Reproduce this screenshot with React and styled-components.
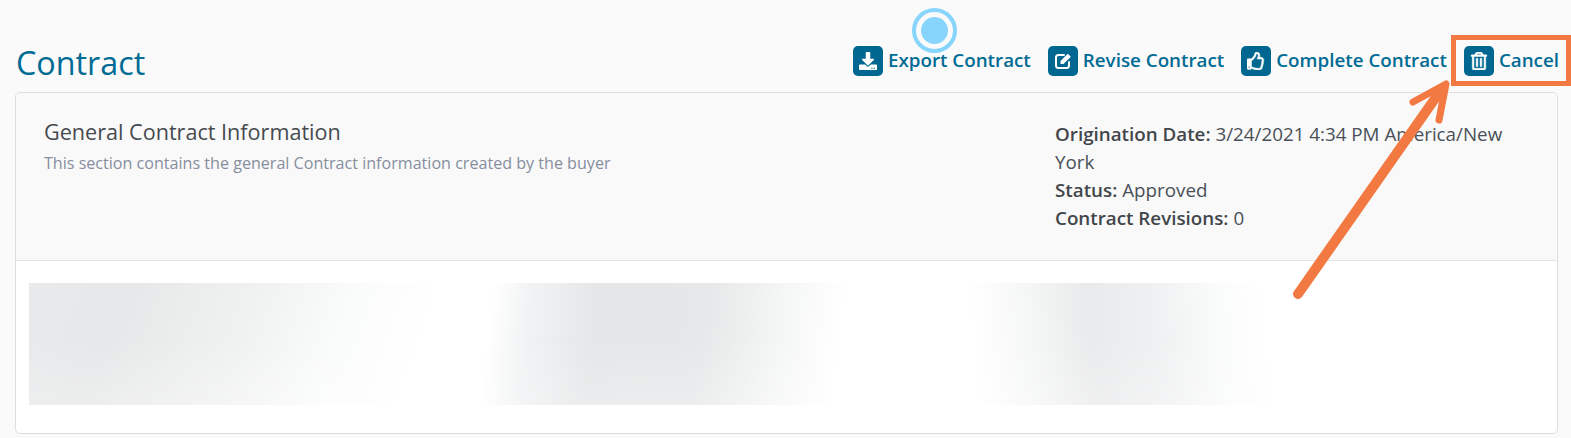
import React from "react";
import styled, { createGlobalStyle } from "styled-components";
import { FaDownload, FaRegThumbsUp, FaRegTrashAlt } from "react-icons/fa";

const GlobalStyle = createGlobalStyle`
  html, body {
    margin: 0;
    padding: 0;
    background: #fafafa;
    font-family: "Open Sans", "Liberation Sans", sans-serif;
  }
`;

// pencil in a square, the package one has a hollow pencil
const EditIcon = () => (
  <svg width="20" height="20" viewBox="0 0 20 20" aria-hidden="true">
    <path
      d="M11 4 H5.5 A2.5 2.5 0 0 0 3 6.5 V14.5 A2.5 2.5 0 0 0 5.5 17 H13.5 A2.5 2.5 0 0 0 16 14.5 V11"
      fill="none"
      stroke="currentColor"
      strokeWidth="2"
      strokeLinecap="round"
    />
    <path d="M7.5 13 V10 L14.8 2.7 L17.8 5.7 L10.5 13 Z" fill="currentColor" />
  </svg>
);

const actions = [
  { label: "Export Contract", icon: <FaDownload /> },
  { label: "Revise Contract", icon: <EditIcon /> },
  { label: "Complete Contract", icon: <FaRegThumbsUp stroke="currentColor" strokeWidth="14" /> },
  { label: "Cancel", icon: <FaRegTrashAlt stroke="currentColor" strokeWidth="14" /> },
];

const smears = [
  {
    width: 441,
    fill: "linear-gradient(110deg, #e9eaeb 0%, #e6e7e8 20%, #f0f1f1 48%, #fafbfb 68%, #fff 85%)",
  },
  {
    width: 390,
    fill: "linear-gradient(97deg, #fff 6%, #f0f2f3 16%, #e4e6e7 32%, #e5e7e8 58%, #f6f7f7 80%, #fff 93%)",
  },
  { width: 100, fill: "#fff" },
  {
    width: 315,
    fill: "linear-gradient(85deg, #fff 6%, #f6f7f7 22%, #e9eaeb 42%, #eff0f1 62%, #fafbfb 82%, #fff 96%)",
  },
];

export default function App() {
  return (
    <Page>
      <GlobalStyle />
      <Header>
        <Title>Contract</Title>
        <Actions>
          {actions.map((action) => (
            <Action key={action.label}>
              <IconBox>{action.icon}</IconBox>
              <ActionLabel>{action.label}</ActionLabel>
            </Action>
          ))}
        </Actions>
      </Header>
      <Card>
        <CardHeader>
          <Intro>
            <Heading>General Contract Information</Heading>
            <SubHeading>This section contains the general Contract information created by the buyer</SubHeading>
          </Intro>
          <Details>
            <b>Origination Date:</b> 3/24/2021 4:34 PM America/New York
            <br />
            <b>Status:</b> Approved
            <br />
            <b>Contract Revisions:</b> 0
          </Details>
        </CardHeader>
        <CardBody>
          <BlurBand>
            {smears.map((smear, index) => (
              <Smear key={index} $width={smear.width} $fill={smear.fill} />
            ))}
          </BlurBand>
        </CardBody>
      </Card>
      <ClickRing />
      <Highlight />
      <Arrow viewBox="0 0 170 230" aria-hidden="true">
        <path d="M12 218 L155 14" strokeWidth="10" />
        <path d="M127 26 L160 8 L153 44" strokeWidth="7" />
      </Arrow>
    </Page>
  );
}

const Page = styled.div`
  position: relative;
  height: 438px;
  padding: 0 13px 0 15px;
  box-sizing: border-box;
  overflow: hidden;
`;

const Header = styled.div`
  height: 92px;
  display: flex;
  justify-content: space-between;
  align-items: flex-end;
`;

const Title = styled.h1`
  margin: 0 0 6px 1px;
  font-size: 32.3px;
  line-height: 48px;
  font-weight: 400;
  color: #006b94;
`;

const Actions = styled.div`
  display: flex;
  gap: 17px;
  margin: 0 -1px 16px 0;
`;

const Action = styled.a`
  display: flex;
  align-items: center;
  gap: 5px;
  font-size: 18.8px;
  font-weight: 600;
  line-height: 30px;
  color: #006b94;
`;

const ActionLabel = styled.span`
  margin-top: -2px;
`;

const IconBox = styled.span`
  width: 30px;
  height: 30px;
  display: flex;
  align-items: center;
  justify-content: center;
  border-radius: 5px;
  background: #006890;
  color: #fff;
  font-size: 18px;
`;

const Card = styled.div`
  border: 1px solid #dedede;
  border-radius: 5px;
  background: #fff;
  overflow: hidden;
`;

const CardHeader = styled.div`
  display: flex;
  justify-content: space-between;
  height: 168px;
  padding: 25px 28px 0;
  box-sizing: border-box;
  background: #f9f9f9;
  border-bottom: 1px solid #e4e4e4;
`;

const Intro = styled.div`
  color: #495057;
`;

const Heading = styled.h2`
  margin: 0;
  font-size: 21.6px;
  line-height: 28px;
  font-weight: 400;
  color: #464a4f;
`;

const SubHeading = styled.p`
  margin: 7px 0 0;
  font-size: 16.1px;
  line-height: 20px;
  color: #868e9e;
`;

const Details = styled.div`
  width: 474px;
  margin-top: 2px;
  font-size: 18.8px;
  line-height: 28px;
  color: #495057;

  b {
    font-weight: 600;
    color: #42464b;
  }
`;

const CardBody = styled.div`
  padding: 22px 13px 28px;
`;

const BlurBand = styled.div`
  display: flex;
  height: 122px;
  position: relative;

  &::after {
    content: "";
    position: absolute;
    inset: 0;
    background: linear-gradient(180deg, rgba(255, 255, 255, 0) 45%, rgba(255, 255, 255, 0.25) 100%);
  }
`;

const Smear = styled.div`
  width: ${(props) => props.$width}px;
  background: ${(props) => props.$fill};
`;

const ClickRing = styled.div`
  position: absolute;
  left: 912px;
  top: 8px;
  width: 45px;
  height: 45px;
  box-sizing: border-box;
  border: 4px solid #87d5fd;
  border-radius: 50%;
  display: flex;
  align-items: center;
  justify-content: center;

  &::before {
    content: "";
    width: 27px;
    height: 27px;
    border-radius: 50%;
    background: #87d5fd;
  }
`;

const Highlight = styled.div`
  position: absolute;
  left: 1451px;
  top: 35px;
  width: 120px;
  height: 51px;
  box-sizing: border-box;
  border: 5px solid #f27a42;
`;

const Arrow = styled.svg`
  position: absolute;
  left: 1286px;
  top: 76px;
  width: 170px;
  height: 230px;
  fill: none;

  path {
    stroke: #f27a42;
    stroke-linecap: round;
    stroke-linejoin: round;
  }
`;
